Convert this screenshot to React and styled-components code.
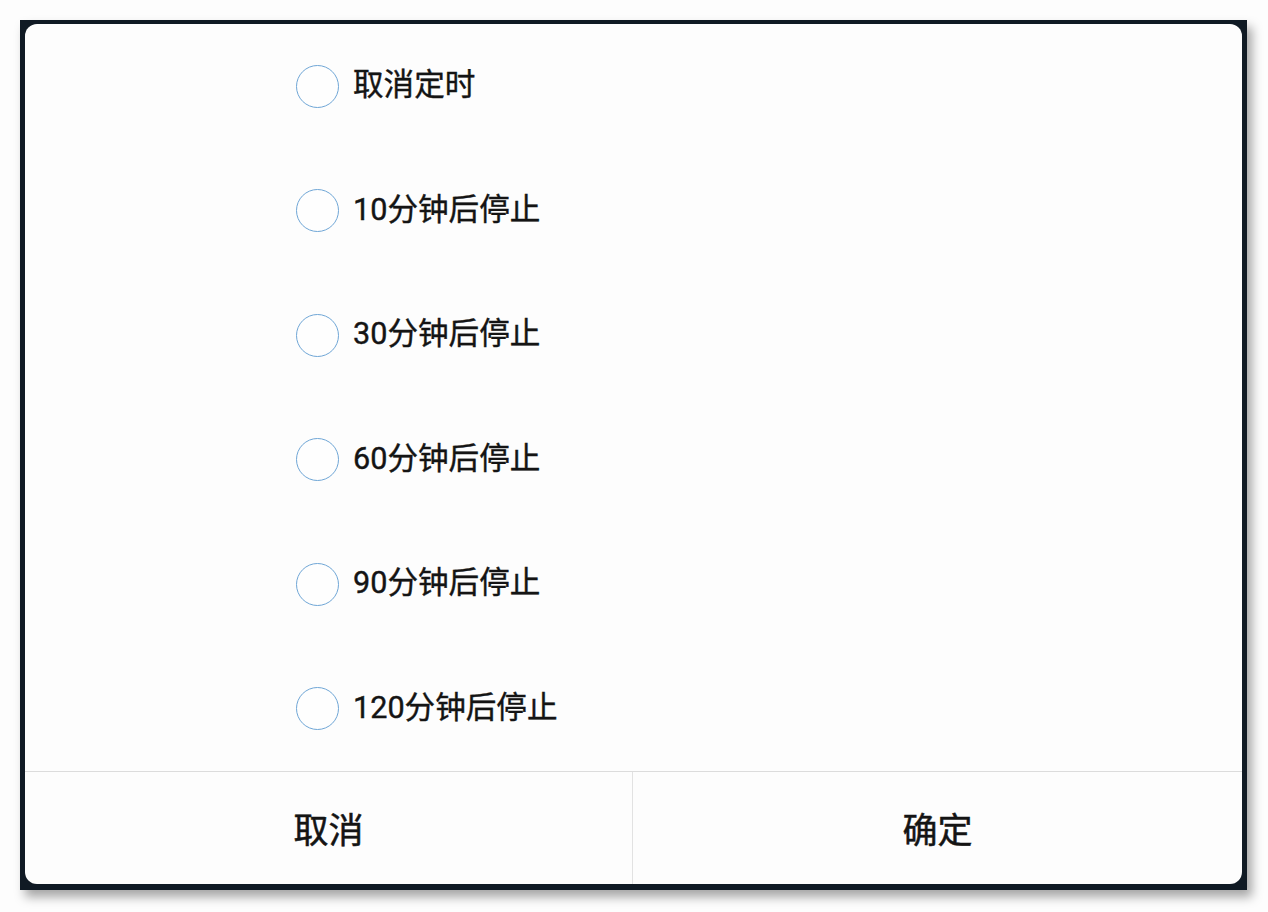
import React from "react";
import styled, { createGlobalStyle } from "styled-components";

const Global = createGlobalStyle`
  html, body { margin: 0; padding: 0; background: #fdfdfd; }
  body { font-family: Roboto, "Noto Sans CJK SC", "Noto Sans", sans-serif; }
`;

const Page = styled.div`
  width: 1268px;
  height: 912px;
  padding: 20px 0 0 20px;
  box-sizing: border-box;
  background: #fdfdfd;
`;

const Frame = styled.div`
  width: 1227px;
  height: 870px;
  box-sizing: border-box;
  background: #101a24;
  padding: 4px 5px 6px 5px;
  box-shadow: 5px 7px 10px rgba(0, 0, 0, 0.35);
  display: flex;
`;

const Dialog = styled.div`
  flex: 1;
  background: #fdfdfd;
  border-radius: 12px;
  display: flex;
  flex-direction: column;
  overflow: hidden;
`;

const List = styled.div`
  flex: 1;
  display: flex;
  flex-direction: column;
`;

const Row = styled.div`
  flex: 1;
  display: flex;
  align-items: center;
  padding-left: 271px;
  gap: 14px;
`;

const Radio = styled.span`
  width: 43px;
  height: 43px;
  box-sizing: border-box;
  border-radius: 50%;
  border: 1.2px solid #6fa6d6;
  background: #fefefe;
  flex: none;
`;

const Label = styled.span`
  font-size: 30.6px;
  font-weight: 400;
  -webkit-text-stroke: 0.4px #141414;
  color: #141414;
  line-height: 1;
  margin-top: -1px;
`;

const Footer = styled.div`
  height: 112px;
  flex: none;
  border-top: 1px solid #dcdcdc;
  display: grid;
  grid-template-columns: 607px 1fr;
`;

const FooterButton = styled.div`
  display: flex;
  align-items: center;
  justify-content: center;
  font-size: 35px;
  font-weight: 400;
  -webkit-text-stroke: 0.5px #141414;
  color: #141414;
  padding-bottom: 2px;
  border-left: ${(p) => (p.$divider ? "1px solid #e2e2e2" : "none")};
`;

const options = [
  "取消定时",
  "10分钟后停止",
  "30分钟后停止",
  "60分钟后停止",
  "90分钟后停止",
  "120分钟后停止",
];

export default function App() {
  return (
    <>
      <Global />
      <Page>
        <Frame>
          <Dialog>
            <List>
              {options.map((o) => (
                <Row key={o}>
                  <Radio />
                  <Label>{o}</Label>
                </Row>
              ))}
            </List>
            <Footer>
              <FooterButton>取消</FooterButton>
              <FooterButton $divider>确定</FooterButton>
            </Footer>
          </Dialog>
        </Frame>
      </Page>
    </>
  );
}
